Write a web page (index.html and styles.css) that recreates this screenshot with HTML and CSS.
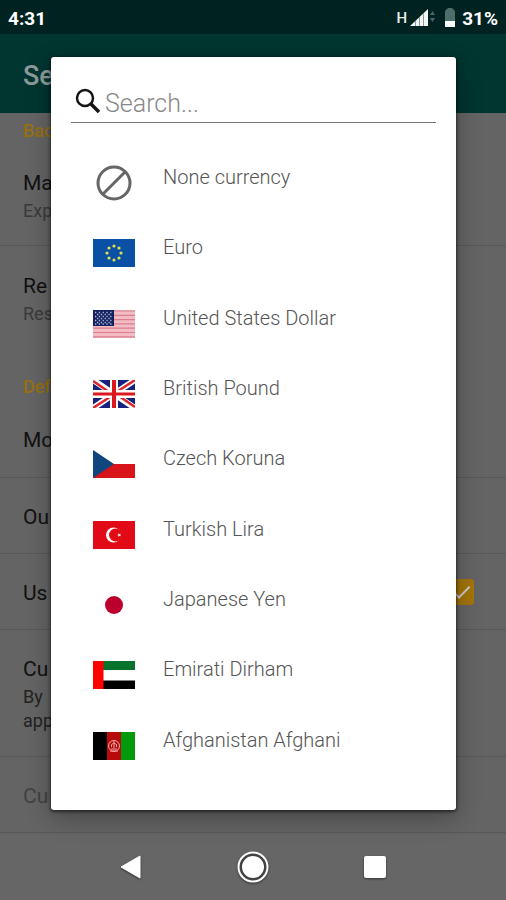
FILE: index.html
```html
<!DOCTYPE html>
<html lang="en">
<head>
<meta charset="utf-8">
<meta name="viewport" content="width=device-width, initial-scale=1">
<title>Currency</title>
<link rel="stylesheet" href="styles.css">
</head>
<body>
<div class="screen">
  <header class="status">
    <span>4:31</span>
    <div class="status-right">
      <span class="network">H</span>
      <svg class="signal" width="26" height="20" viewBox="0 0 26 20" aria-hidden="true">
        <path fill="#f2f6f5" d="M0 18 18 1v17z"/>
        <path stroke="#8a9d9a" stroke-width="1" d="M5.500 13v5M9.500 9v9M13.500 5v13"/>
        <path fill="#4c6663" d="M20 7l2.500-4L25 7zM20 10h5l-2.500 4z"/>
      </svg>
      <svg class="battery" width="12" height="20" viewBox="0 0 12 20" aria-hidden="true">
        <path fill="#4e6e69" d="M4 0h4l3 3v10H1V3z"/>
        <path fill="#fff" d="M1 13h10v6H1z"/>
      </svg>
      <span>31%</span>
    </div>
  </header>
  <div class="appbar"><h1>Se</h1></div>
  <main class="settings">
    <h2 class="section">Bac</h2>
    <div class="item item-first"><p class="title">Ma</p><p class="note">Exp</p></div>
    <div class="item item-restore"><p class="title">Re</p><p class="note">Res</p></div>
    <h2 class="section section-second">Def</h2>
    <div class="item item-short"><p class="title">Mo</p></div>
    <div class="item item-line"><p class="title">Ou</p></div>
    <div class="item item-line">
      <label class="title" for="use">Us</label>
      <input class="check" id="use" type="checkbox" checked>
    </div>
    <div class="item item-tall"><p class="title">Cu</p><p class="note note-dark">By<br>app</p></div>
    <div class="item item-line disabled"><p class="title">Cu</p></div>
  </main>
  <nav class="navbar">
    <button aria-label="Back"><svg width="24" height="26" viewBox="0 0 24 26"><path fill="#fff" stroke="#fff" stroke-width="1" stroke-linejoin="round" d="M2 13 21 2v22z"/></svg></button>
    <button aria-label="Home"><svg width="34" height="34" viewBox="0 0 34 34"><circle cx="17" cy="17" r="13" fill="none" stroke="#444" stroke-width="3"/><circle cx="17" cy="17" r="14.500" fill="none" stroke="#fff" stroke-width="2"/><circle cx="17" cy="17" r="11" fill="#fff"/></svg></button>
    <button aria-label="Recent apps"><svg width="24" height="24" viewBox="0 0 24 24"><rect x="1" y="1" width="22" height="22" rx="2" fill="#fff"/></svg></button>
  </nav>

  <div class="overlay">
    <section class="dialog" role="dialog" aria-label="Currency">
      <div class="search">
        <svg width="28" height="28" viewBox="0 0 28 28" aria-hidden="true"><circle cx="10" cy="10" r="8" fill="none" stroke="#151515" stroke-width="2.500"/><path stroke="#151515" stroke-width="3.500" d="m16 16 8 8"/></svg>
        <input type="text" aria-label="Search" placeholder="Search...">
      </div>
      <ul class="list">
        <li><button><svg class="flag" viewBox="0 0 42 36"><g fill="none" stroke="#666" stroke-width="3"><circle cx="21" cy="18" r="16"/><path d="M10 29 32 7"/></g></svg><span>None currency</span></button></li>
        <li><button><svg class="flag" viewBox="0 0 42 28"><path fill="#0a50a5" d="M0 0h42v28H0z"/><g fill="#e3e14a"><circle cx="21" cy="7" r="1.600"/><circle cx="26" cy="9" r="1.600"/><circle cx="28" cy="14" r="1.600"/><circle cx="26" cy="19" r="1.600"/><circle cx="21" cy="21" r="1.600"/><circle cx="16" cy="19" r="1.600"/><circle cx="14" cy="14" r="1.600"/><circle cx="16" cy="9" r="1.600"/></g></svg><span>Euro</span></button></li>
        <li><button><svg class="flag" viewBox="0 0 42 28"><path fill="#f3bcc5" d="M0 0h42v28H0z"/><path stroke="#d97f8f" stroke-width="1.200" d="M0 1h42M0 5.300h42M0 9.600h42M0 13.900h42M0 18.200h42M0 22.500h42M0 26.800h42"/><path fill="#15205f" d="M0 0h21v16H0z"/><g stroke="#a9bddb" stroke-width="1.300" stroke-dasharray="1.300 2.500"><path d="M2 2.500h18M2 6.500h18M2 10.500h18M2 14h18"/><path d="M4 4.500h15M4 8.500h15M4 12.500h15"/></g></svg><span>United States Dollar</span></button></li>
        <li><button><svg class="flag" viewBox="0 0 42 28"><path fill="#16227e" d="M0 0h42v28H0z"/><path stroke="#fff" stroke-width="6" d="m0 0 42 28M42 0 0 28"/><path stroke="#e0262c" stroke-width="2.500" d="m0 1 19 13M42 0 22 13M0 28l20-13M42 27 23 14"/><path stroke="#fff" stroke-width="8" d="M21 0v28M0 14h42"/><path stroke="#dc1820" stroke-width="4" d="M21 0v28"/><path stroke="#dc1820" stroke-width="3" d="M0 14h42"/></svg><span>British Pound</span></button></li>
        <li><button><svg class="flag" viewBox="0 0 42 28"><path fill="#fff" d="M0 0h42v14H0z"/><path fill="#d7141a" d="M0 14h42v14H0z"/><path fill="#11457e" d="m0 0 21 14L0 28z"/></svg><span>Czech Koruna</span></button></li>
        <li><button><svg class="flag" viewBox="0 0 42 28"><path fill="#e30a17" d="M0 0h42v28H0z"/><circle cx="20.500" cy="14" r="7.500" fill="#fff"/><circle cx="22.500" cy="14" r="6.500" fill="#e30a17"/><path fill="#fff" d="m24 14 1.500-.4V12l1 1.300 1.500-.5-.9 1.200.9 1.200-1.500-.5-1 1.300v-1.600z"/></svg><span>Turkish Lira</span></button></li>
        <li><button><svg class="flag" viewBox="0 0 42 28"><path fill="#fff" d="M0 0h42v28H0z"/><circle cx="21" cy="14" r="9" fill="#bc002d"/></svg><span>Japanese Yen</span></button></li>
        <li><button><svg class="flag" viewBox="0 0 42 28"><path fill="#fff" d="M0 0h42v28H0z"/><path fill="#08732d" d="M10 0h32v9H10z"/><path fill="#000" d="M10 19.500h32V28H10z"/><path fill="#f00" d="M0 0h10.500v28H0z"/></svg><span>Emirati Dirham</span></button></li>
        <li><button><svg class="flag" viewBox="0 0 42 28"><path fill="#000" d="M0 0h14v28H0z"/><path fill="#b80a0a" d="M14 0h14v28H14z"/><path fill="#009a0c" d="M28 0h14v28H28z"/><g fill="none" stroke="#eba6a6" stroke-width="1"><circle cx="21" cy="14" r="5.500"/><path d="M18 17h6M18.500 15v-2.500q2.500-3 5 0V15M21 9v7M17 19h8"/></g></svg><span>Afghanistan Afghani</span></button></li>
      </ul>
    </section>
  </div>
</div>
</body>
</html>
```
FILE: styles.css
```css
* { box-sizing: border-box; }
body, h1, h2, p, ul { margin: 0; }
body { font-family: Roboto, "Liberation Sans", sans-serif; background: #666; }
button { border: 0; padding: 0; background: none; font: inherit; color: inherit; }
svg { display: block; flex: none; }

.screen { position: relative; min-height: 100vh; display: flex; flex-direction: column; overflow: hidden; }

.status {
  height: 34px; padding: 2px 8px 0; display: flex; align-items: center; justify-content: space-between;
  background: #002220; color: #fff; font-size: 19px; font-weight: 700;
}
.status-right { display: flex; align-items: center; }
.network { font-size: 15px; font-weight: 500; margin-right: 3px; color: #e6eeec; }
.battery { margin: 0 6px 0 8px; }

.appbar { height: 79px; padding: 4px 0 0 23px; display: flex; align-items: center; background: #003530; }
.appbar h1 { font-size: 27px; font-weight: 500; color: #8d9c9a; }

.settings { flex: 1; background: #646464; }
.section { padding: 6px 23px 0; font-size: 18px; line-height: 24px; font-weight: 500; color: #987012; }
.section-second { padding-top: 32px; }
.item { position: relative; padding: 0 23px; border-bottom: 1px solid #585858; }
.title { display: block; font-size: 21px; line-height: 28px; color: #111; }
.note { padding-top: 2px; font-size: 18px; line-height: 24px; color: #3a3a3a; }
.note-dark { color: #222; }
.item-first { padding-top: 26px; height: 103px; }
.item-restore { padding-top: 26px; height: 97px; border-bottom: 0; }
.item-short { height: 79px; padding-top: 27px; }
.item-line { height: 76px; padding-top: 25px; }
.item-tall { height: 127px; padding-top: 25px; }
.disabled .title { color: #424242; }
.check {
  position: absolute; right: 32px; top: 25px; width: 26px; height: 26px; margin: 0;
  appearance: none; border-radius: 3px; background: #a37408;
}
.check::after {
  content: ""; position: absolute; left: 9px; top: 3px; width: 7px; height: 14px;
  border: solid #ccc; border-width: 0 2px 2px 0; transform: rotate(45deg);
}

.navbar {
  height: 66px; padding: 0 70px; display: grid; grid-template-columns: repeat(3, 1fr);
  align-items: center; justify-items: center; background: #666;
}
.navbar svg { filter: drop-shadow(0 1px 1px #333); }

.overlay { position: absolute; inset: 57px 50px 90px 51px; display: flex; }
.dialog {
  flex: 1; padding: 24px 20px 29px; display: flex; flex-direction: column;
  background: #fff; border-radius: 3px; box-shadow: 0 1px 3px 1px rgba(0,0,0,.5), 0 8px 24px rgba(0,0,0,.3);
}
.search { height: 42px; padding: 0 4px; display: flex; align-items: center; gap: 2px; border-bottom: 1px solid #777; }
.search input {
  flex: 1; min-width: 0; border: 0; padding: 4px 0 0; outline: 0; background: none;
  font: 300 25px/32px Roboto, "Liberation Sans", sans-serif; color: #333;
}
.search input::placeholder { color: #888; opacity: 1; }
.list { flex: 1; margin-top: 25px; padding: 0; list-style: none; display: grid; grid-auto-rows: 1fr; }
.list li { display: flex; }
.list button { flex: 1; padding: 0 22px; display: flex; align-items: center; gap: 28px; text-align: left; }
.list span { padding-bottom: 12px; font-size: 20px; line-height: 24px; font-weight: 300; color: #555; }
.flag { width: 42px; }
```
